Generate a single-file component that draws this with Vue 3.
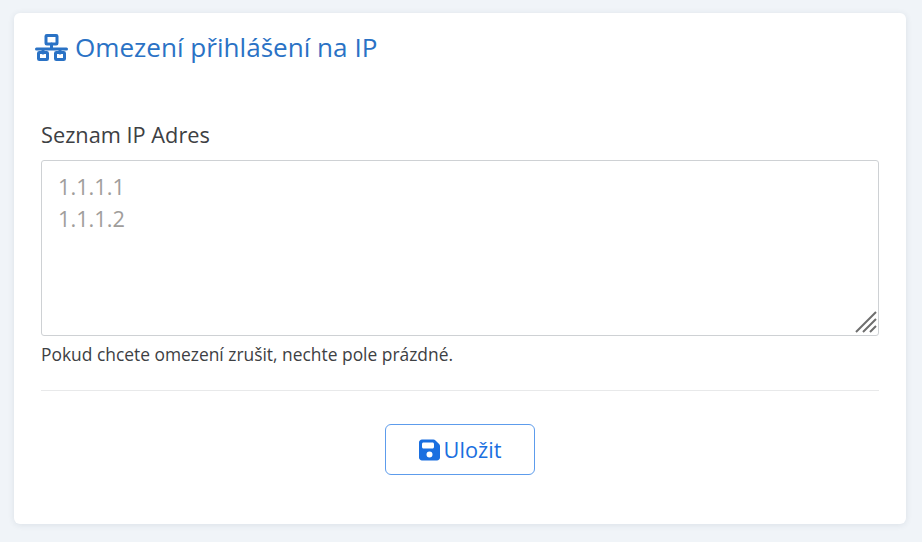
<template>
  <main class="page">
    <section class="card">
      <h1 class="card__title">
        <svg class="card__icon" viewBox="0 0 33 27" aria-hidden="true">
          <path d="M1.500 15h30M16.500 10v5M8 15v4M25 15v4" />
          <rect x="11" y="1.500" width="11" height="8.500" rx="0.800" />
          <rect x="3.500" y="18.500" width="9" height="7" rx="0.800" />
          <rect x="20.500" y="18.500" width="9" height="7" rx="0.800" />
        </svg>
        <span>Omezení přihlášení na IP</span>
      </h1>

      <form class="form" @submit.prevent>
        <label class="form__label" for="ip-list">Seznam IP Adres</label>
        <div class="form__field">
          <textarea id="ip-list" class="form__input" :placeholder="placeholder"></textarea>
          <svg class="form__grip" viewBox="0 0 22 22" aria-hidden="true">
            <path d="M1 21 21 1M8 21 21 8M15 21l6-6" />
          </svg>
        </div>
        <p class="form__hint">Pokud chcete omezení zrušit, nechte pole prázdné.</p>
        <hr class="form__line" />
        <div class="form__actions">
          <button class="form__save" type="submit">
            <svg viewBox="0 0 448 512" aria-hidden="true">
              <path d="M64 32C28.700 32 0 60.700 0 96v320c0 35.300 28.700 64 64 64h320c35.300 0 64-28.700 64-64V173.300c0-17-6.700-33.300-18.700-45.300L352 50.700C340 38.700 323.700 32 306.700 32H64Zm0 96c0-17.700 14.300-32 32-32h192c17.700 0 32 14.300 32 32v64c0 17.700-14.300 32-32 32H96c-17.700 0-32-14.300-32-32v-64Zm160 160a64 64 0 1 1 0 128 64 64 0 1 1 0-128Z" />
            </svg>
            <span>Uložit</span>
          </button>
        </div>
      </form>
    </section>
  </main>
</template>

<script setup>
const placeholder = '1.1.1.1\n1.1.1.2';
</script>

<style>
html,
body {
  margin: 0;
  background: #f0f4f8;
}
</style>

<style scoped>
.page {
  box-sizing: border-box;
  height: 542px;
  padding: 13px 16px 18px 14px;
  font-family: "Open Sans", "Noto Sans", sans-serif;
  overflow: hidden;
}
.card {
  box-sizing: border-box;
  height: 511px;
  padding: 15px 27px 0;
  border-radius: 6px;
  background: #fff;
  box-shadow: 0 1px 6px rgba(40, 60, 90, 0.1);
}
.card__title {
  display: flex;
  align-items: center;
  gap: 7px;
  margin: 0 0 0 -6px;
  font-size: 26.100px;
  line-height: 38px;
  font-weight: 400;
  color: #2a72c5;
}
.card__icon {
  flex: none;
  width: 33px;
  height: 27px;
  fill: none;
  stroke: currentColor;
  stroke-width: 3;
  stroke-linecap: round;
}
.form {
  margin-top: 53px;
}
.form__label {
  display: block;
  font-size: 21.750px;
  line-height: 32px;
  color: #3d4043;
}
.form__field {
  position: relative;
  margin-top: 9px;
  height: 176px;
}
.form__input {
  display: block;
  box-sizing: border-box;
  width: 100%;
  height: 100%;
  padding: 10px 16px;
  border: 1px solid #ced1d4;
  border-radius: 3px;
  outline: none;
  resize: none;
  font: inherit;
  font-size: 21.750px;
  line-height: 32px;
  color: #3d4043;
  background: #fff;
}
.form__input::placeholder {
  color: #a09d9b;
  opacity: 1;
}
.form__grip {
  position: absolute;
  right: 2px;
  bottom: 3px;
  width: 22px;
  height: 22px;
  fill: none;
  stroke: #6e6e6e;
  stroke-width: 2;
  pointer-events: none;
}
.form__hint {
  margin: 6px 0 0;
  font-size: 17.400px;
  line-height: 24px;
  color: #3d4043;
}
.form__line {
  margin: 24px 0 0;
  border: 0;
  border-top: 1px solid #e8e9ea;
}
.form__actions {
  display: flex;
  justify-content: center;
  margin-top: 33px;
}
.form__save {
  display: flex;
  align-items: center;
  justify-content: center;
  gap: 4px;
  box-sizing: border-box;
  width: 150px;
  height: 51px;
  padding: 0;
  border: 1px solid #5d9cec;
  border-radius: 6px;
  background: #fff;
  font: inherit;
  font-size: 21.750px;
  color: #1a6fe0;
  cursor: pointer;
}
.form__save svg {
  width: 21px;
  height: 24px;
  fill: currentColor;
}
</style>
